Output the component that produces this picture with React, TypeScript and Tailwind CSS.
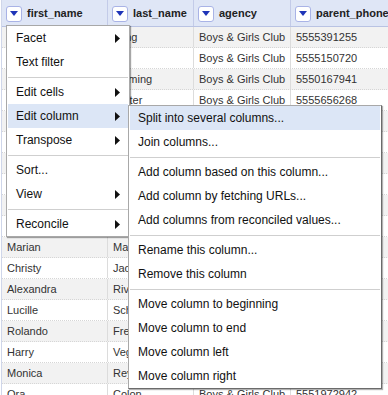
import React from 'react';

const rows: string[][] = [
  ['Kelly', 'Long', 'Boys & Girls Club', '5555391255'],
  ['Susan', 'Hill', 'Boys & Girls Club', '5555150720'],
  ['Brian', 'Fleming', 'Boys & Girls Club', '5550167941'],
  ['Anna', 'Potter', 'Boys & Girls Club', '5555656268'],
  ['Tyrone', 'Banks', 'Boys & Girls Club', '5555483921'],
  ['Jenny', 'Lowe', 'Boys & Girls Club', '5555720394'],
  ['Doris', 'Wade', 'Boys & Girls Club', '5550918273'],
  ['Kurt', 'Moss', 'Boys & Girls Club', '5555302847'],
  ['Elsa', 'Park', 'Boys & Girls Club', '5555610582'],
  ['Ruben', 'Cruz', 'Boys & Girls Club', '5555847203'],
  ['Marian', 'Mason', 'Boys & Girls Club', '5555230471'],
  ['Christy', 'Jackson', 'Boys & Girls Club', '5555193846'],
  ['Alexandra', 'Rivera', 'Boys & Girls Club', '5550472619'],
  ['Lucille', 'Schmidt', 'Boys & Girls Club', '5555638201'],
  ['Rolando', 'Freeman', 'Boys & Girls Club', '5555902147'],
  ['Harry', 'Vega', 'Boys & Girls Club', '5555381960'],
  ['Monica', 'Reyes', 'Boys & Girls Club', '5555027483'],
  ['Ora', 'Colon', 'Boys & Girls Club', '5551972942'],
];

const columns = [
  { name: 'first_name', width: 'w-[106px]' },
  { name: 'last_name', width: 'w-[86px]' },
  { name: 'agency', width: 'w-[97px]' },
  { name: 'parent_phone', width: 'w-[120px]' },
];

function DropButton() {
  return (
    <span className="flex h-4 w-4 shrink-0 items-center justify-center rounded-[3px] border border-[#a9b3e6] bg-white">
      <svg width="8" height="5" viewBox="0 0 8 5">
        <path d="M0 0H8L4 5Z" fill="#1f35b8" />
      </svg>
    </span>
  );
}

function Arrow() {
  return (
    <svg width="5" height="9" viewBox="0 0 5 9">
      <path d="M0 0L5 4.5L0 9Z" fill="#111" />
    </svg>
  );
}

function Item({ label, sub, active }: { label: string; sub?: boolean; active?: boolean }) {
  return (
    <div className={`flex h-6 items-center justify-between pl-2 pr-2 ${active ? 'bg-[#dce6f6]' : ''}`}>
      <span className="whitespace-nowrap">{label}</span>
      {sub && <Arrow />}
    </div>
  );
}

function Sep() {
  return (
    <div className="flex h-[6px] items-center">
      <div className="h-px w-full bg-[#cfcfcf]" />
    </div>
  );
}

export default function App() {
  return (
    <div
      className="relative h-[395px] w-[388px] overflow-hidden bg-white text-[11px] text-[#333]"
      style={{ fontFamily: '"Liberation Sans", Arial, sans-serif' }}
    >
      <div className="ml-px w-[420px] border-l border-[#cfd6ea]">
        {/* header */}
        <div className="flex h-[27px] border-b border-[#b9c3e3] bg-[#dfe6f6]">
          {columns.map((c) => (
            <div
              key={c.name}
              className={`flex shrink-0 items-center gap-[5px] border-r border-[#c3cbe8] pl-[4px] pt-px font-bold text-[#222] ${c.width}`}
            >
              <DropButton />
              <span className="whitespace-nowrap">{c.name}</span>
            </div>
          ))}
        </div>
        {/* body */}
        {rows.map((r, i) => (
          <div
            key={i}
            className={`flex h-[21px] border-b border-dotted border-[#d6d6d6] ${i % 2 === 0 ? 'bg-[#f2f2f2]' : 'bg-white'}`}
          >
            {r.map((v, j) => (
              <div
                key={j}
                className={`flex shrink-0 items-center overflow-hidden whitespace-nowrap border-r border-[#dcdcdc] pl-[5px] ${columns[j].width}`}
              >
                {v}
              </div>
            ))}
          </div>
        ))}
      </div>

      {/* column menu */}
      <div className="absolute left-[6px] top-[25px] z-10 w-[124px] border border-[#a8a8a8] bg-white px-px text-[12px] text-[#111] shadow-[1px_1px_1px_rgba(0,0,0,0.35)]">
        <Item label="Facet" sub />
        <Item label="Text filter" />
        <Sep />
        <Item label="Edit cells" sub />
        <Item label="Edit column" sub active />
        <Item label="Transpose" sub />
        <Sep />
        <Item label="Sort..." />
        <Item label="View" sub />
        <Sep />
        <Item label="Reconcile" sub />
      </div>

      {/* edit column submenu */}
      <div className="absolute left-[128px] top-[105px] z-20 w-[254px] border border-[#a8a8a8] border-b-[#6b6b6b] border-r-[#6b6b6b] bg-white px-px text-[12px] text-[#111] shadow-[1px_1px_1px_rgba(0,0,0,0.3)]">
        <Item label="Split into several columns..." active />
        <Item label="Join columns..." />
        <Sep />
        <Item label="Add column based on this column..." />
        <Item label="Add column by fetching URLs..." />
        <Item label="Add columns from reconciled values..." />
        <Sep />
        <Item label="Rename this column..." />
        <Item label="Remove this column" />
        <Sep />
        <Item label="Move column to beginning" />
        <Item label="Move column to end" />
        <Item label="Move column left" />
        <Item label="Move column right" />
      </div>
    </div>
  );
}
